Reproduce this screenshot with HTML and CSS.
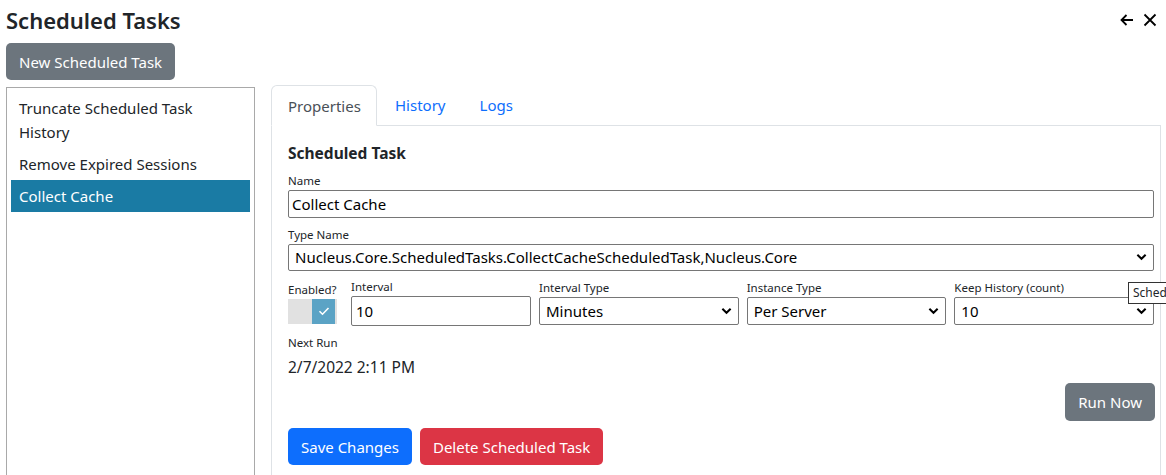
FILE: index.html
```html
<!DOCTYPE html>
<html>
<head>
<meta charset="utf-8">
<link rel="stylesheet" href="styles.css">
</head>
<body>
<div class="page">
  <header class="topbar">
    <h1 class="title">Scheduled Tasks</h1>
    <div class="top-icons">
      <svg class="ico" width="16" height="16" viewBox="0 0 16 16"><path d="M14 8H2.5M7.5 3L2.5 8l5 5" fill="none" stroke="#000" stroke-width="1.8"/></svg>
      <svg class="ico" width="14" height="14" viewBox="0 0 14 14"><path d="M1.5 1.5l11 11M12.5 1.5l-11 11" fill="none" stroke="#000" stroke-width="1.8"/></svg>
    </div>
  </header>
  <button class="btn btn-secondary btn-new">New Scheduled Task</button>
  <div class="main">
    <aside class="sidebar">
      <div class="item">Truncate Scheduled Task History</div>
      <div class="item">Remove Expired Sessions</div>
      <div class="item active">Collect Cache</div>
    </aside>
    <section class="content">
      <nav class="tabs">
        <span class="tab active">Properties</span>
        <span class="tab">History</span>
        <span class="tab">Logs</span>
      </nav>
      <div class="panel">
        <h2 class="heading">Scheduled Task</h2>
        <label class="lbl">Name</label>
        <input class="text-input wide" type="text" value="Collect Cache">
        <label class="lbl lbl-gap">Type Name</label>
        <select class="sel wide"><option>Nucleus.Core.ScheduledTasks.CollectCacheScheduledTask,Nucleus.Core</option></select>
        <div class="grid-row">
          <div class="col">
            <label class="lbl">Enabled?</label>
            <div class="toggle"><span class="t-off"></span><span class="t-on"><svg width="12" height="10" viewBox="0 0 12 10"><path d="M1.5 5.2l3 3L10.5 2" fill="none" stroke="#fff" stroke-width="1.6"/></svg></span><span class="t-edge"></span></div>
          </div>
          <div class="col">
            <label class="lbl">Interval</label>
            <input class="text-input num" type="text" value="10">
          </div>
          <div class="col">
            <label class="lbl">Interval Type</label>
            <select class="sel"><option>Minutes</option></select>
          </div>
          <div class="col">
            <label class="lbl">Instance Type</label>
            <select class="sel"><option>Per Server</option></select>
          </div>
          <div class="col">
            <label class="lbl">Keep History (count)</label>
            <select class="sel"><option>10</option></select>
          </div>
        </div>
        <label class="lbl lbl-next">Next Run</label>
        <div class="next-val">2/7/2022 2:11 PM</div>
        <div class="run-row"><button class="btn btn-secondary">Run Now</button></div>
        <div class="actions">
          <button class="btn btn-primary">Save Changes</button>
          <button class="btn btn-danger">Delete Scheduled Task</button>
        </div>
      </div>
    </section>
  </div>
  <div class="tooltip">Sched</div>
</div>
</body>
</html>
```

FILE: styles.css
```css
html, body {
  margin: 0;
  padding: 0;
  background: #fff;
  overflow: hidden;
}
body {
  font-family: "Noto Sans", "Open Sans", sans-serif;
  color: #212529;
  font-size: 15px;
  line-height: 24px;
}
.page {
  padding: 0 0 0 6px;
  height: 475px;
  box-sizing: border-box;
}
.topbar {
  display: flex;
  justify-content: space-between;
  align-items: center;
  height: 43px;
  padding-right: 9px;
}
.title {
  margin: 0;
  font-size: 22px;
  font-weight: 600;
  line-height: 28px;
  padding-bottom: 3px;
}
.top-icons {
  display: flex;
  align-items: center;
  gap: 8px;
  padding-bottom: 4px;
}
.ico { display: block; }
.btn {
  font-family: inherit;
  font-size: 15px;
  line-height: 24px;
  padding: 7px 13px;
  border: 0;
  border-radius: 5px;
  color: #fff;
  cursor: pointer;
}
.btn-secondary { background: #6c757d; }
.btn-primary { background: #0d6efd; }
.btn-danger { background: #dc3545; }
.btn-new { display: block; height: 37px; padding: 6px 13px; }
.main {
  display: flex;
  margin-top: 5px;
  gap: 16px;
  align-items: flex-start;
}
.sidebar {
  flex: 0 0 249px;
  box-sizing: border-box;
  border: 1px solid #a9a9a9;
  padding: 4px;
  height: 400px;
  margin-top: 2px;
}
.item {
  padding: 4px 8px;
  color: #212529;
}
.item.active {
  background: #1a7ba4;
  color: #fff;
}
.content {
  flex: 0 0 889px;
}
.tabs {
  display: flex;
  border-bottom: 1px solid #dee2e6;
  height: 41px;
  box-sizing: border-box;
}
.tab {
  padding: 8px 16px 8px 17px;
  color: #0d6efd;
  height: 41px;
  box-sizing: border-box;
}
.tab.active {
  color: #495057;
  border: 1px solid #dee2e6;
  border-bottom-color: #fff;
  border-radius: 6px 6px 0 0;
  padding: 8px 16px;
  width: 106px;
  margin-bottom: -1px;
  background: #fff;
}
.tab + .tab { padding-left: 18px; }
.panel {
  border: 1px solid #dee2e6;
  border-top: 0;
  padding: 15px 5px 20px 16px;
  display: flex;
  flex-direction: column;
  height: 360px;
  box-sizing: border-box;
}
.heading {
  margin: 0 0 7px;
  font-size: 15.5px;
  font-weight: 700;
  line-height: 24px;
}
.lbl {
  display: block;
  font-size: 11.5px;
  line-height: 18px;
  color: #212529;
}
.lbl-gap { margin-top: 8px; }
.text-input, .sel {
  font-family: inherit;
  font-size: 15px;
  color: #000;
  border: 1px solid #767676;
  border-radius: 2px;
  box-sizing: border-box;
  background-color: #fff;
}
.text-input {
  height: 29px;
  padding: 0 3px;
}
.wide { width: 866px; }
.sel {
  -webkit-appearance: none;
  appearance: none;
  height: 28px;
  padding: 0 20px 0 6px;
  background-image: url("data:image/svg+xml,%3Csvg xmlns='http://www.w3.org/2000/svg' width='12' height='8' viewBox='0 0 12 8'%3E%3Cpath d='M1.5 1.5l4.5 4.5 4.5-4.5' fill='none' stroke='%23000' stroke-width='2.2'/%3E%3C/svg%3E");
  background-repeat: no-repeat;
  background-position: right 6px center;
  background-size: 11px 8px;
  width: 100%;
}
.sel.wide { width: 866px; }
.grid-row {
  display: grid;
  grid-template-columns: 55px 180px 1fr 1fr 1fr;
  column-gap: 8px;
  align-items: center;
  margin-top: 7px;
  width: 866px;
}
.col { display: flex; flex-direction: column; min-width: 0; }
.text-input.num { height: 30px; width: 180px; padding: 0 4px; }
.toggle {
  display: flex;
  height: 25px;
  width: 49px;
}
.t-off { width: 24px; background: #e1e1e1; }
.t-on {
  width: 23px;
  background: #5ba3c5;
  display: flex;
  align-items: center;
  justify-content: center;
}
.t-edge { width: 2px; background: #e1e1e1; }
.lbl-next { margin-top: 8px; }
.next-val { line-height: 24px; margin-top: 3px; font-size: 15.5px; }
.run-row {
  display: flex;
  justify-content: flex-end;
  margin-top: 4px;
  width: 867px;
}
.run-row .btn { height: 38px; }
.actions {
  display: flex;
  gap: 8px;
  margin-top: 7px;
}
.actions .btn { height: 37px; }
.tooltip {
  position: absolute;
  left: 1128px;
  top: 282px;
  width: 38px;
  overflow: hidden;
  height: 22px;
  padding: 0 0 0 4px;
  border: 1px solid #333;
  border-right: 0;
  background: #fff;
  font-size: 12px;
  line-height: 20px;
  white-space: nowrap;
  box-sizing: border-box;
}
```
